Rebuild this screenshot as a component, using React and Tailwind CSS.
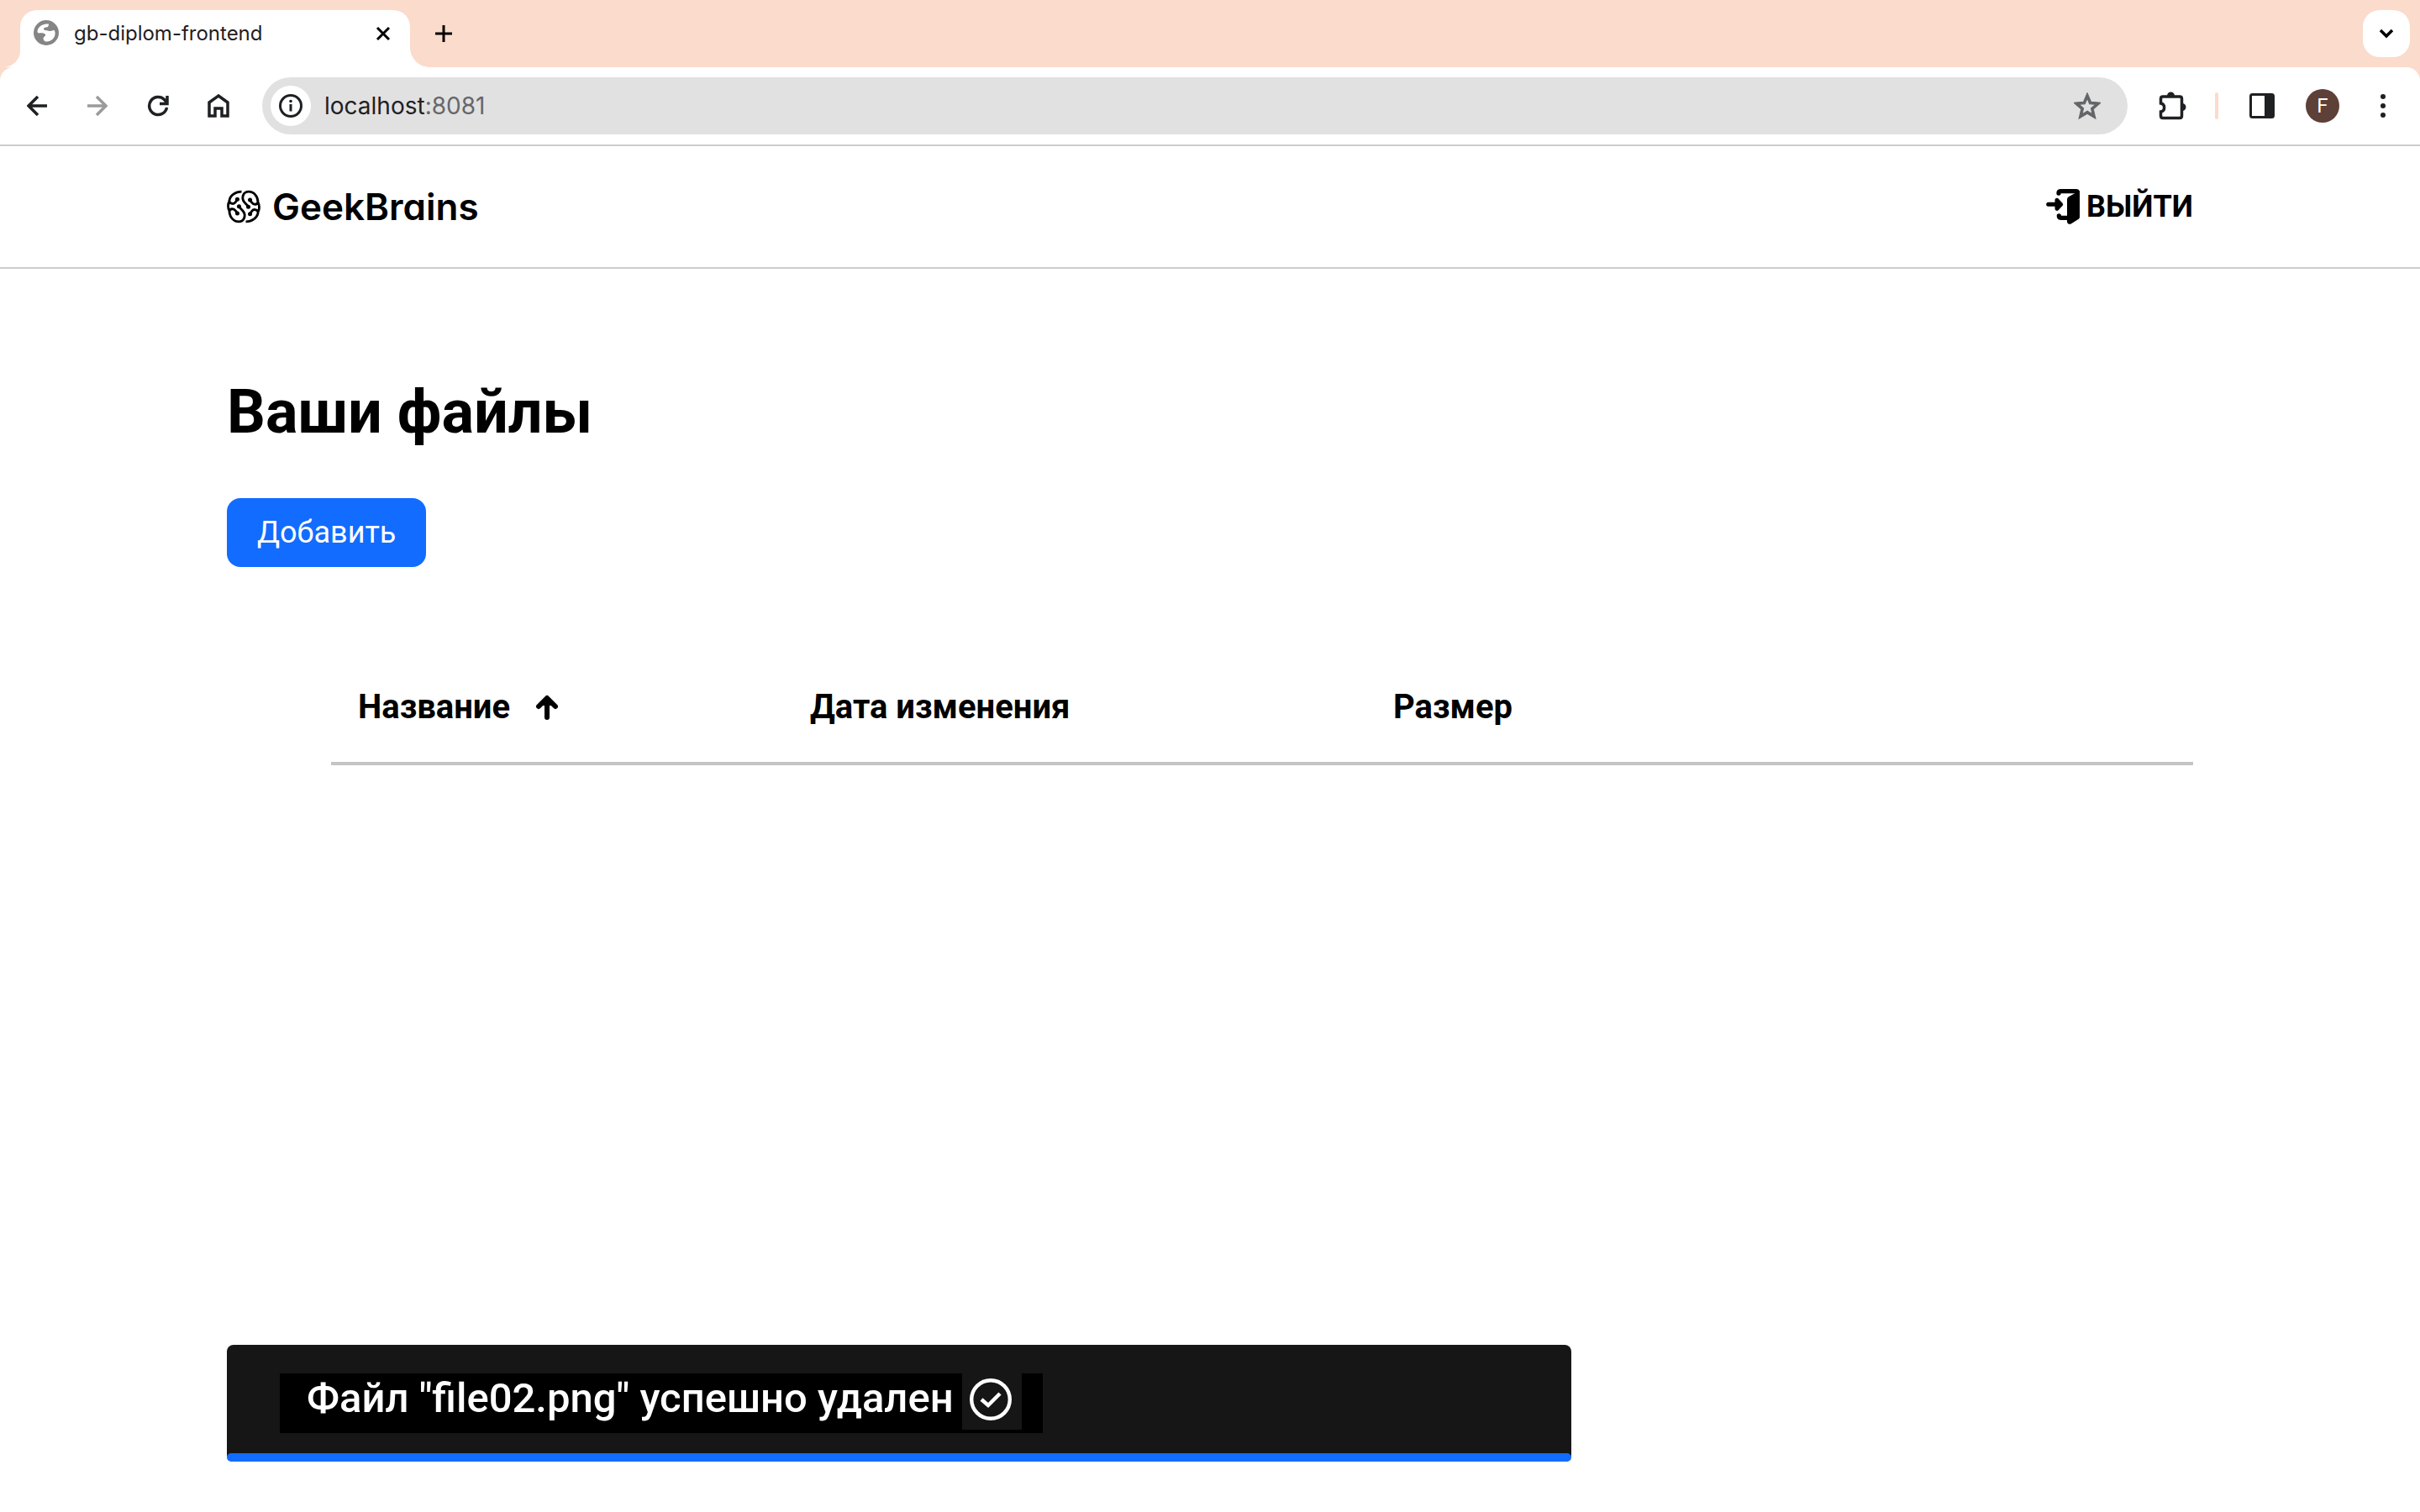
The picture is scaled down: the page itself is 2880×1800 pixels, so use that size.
import React from "react";

function GlobeIcon() {
  return (
    <svg className="size-[30px] shrink-0" viewBox="0 0 30 30" aria-hidden="true">
      <circle cx="15" cy="15" r="15" fill="#858585" />
      <path
        d="M18 4.500C14 4 8 5.500 5.500 10C4 13 4 15 6 15.500C9 15 13 15 14 17C15 19 11 20 11.500 22C12 24 13 25.500 15 25.500C20 26 25 22 25.500 17C26 14 25 12 24 12C22 12 21 13.500 18.500 13C16 12 14 12.500 12.500 11.500C11 10 13 8.500 15 8.500C17 8.500 18 7 18 4.500Z"
        fill="#fff"
      />
    </svg>
  );
}

function BrainLobe() {
  return (
    <g>
      <path
        d="M81 37C60 37 40 50 38 68C36 78 52 84 59 75L66 64M38 70C32 80 32 96 38 106M38 106C40 96 54 96 59 104L66 113M38 106C38 126 52 143 71 143C90 143 95 124 90 112C86 102 76 98 72 89"
        fill="none"
        stroke="currentColor"
        strokeWidth="8.500"
        strokeLinejoin="round"
      />
      <circle cx="66" cy="64" r="7.500" fill="currentColor" />
      <circle cx="72" cy="89" r="7.500" fill="currentColor" />
      <circle cx="66" cy="114" r="7.500" fill="currentColor" />
    </g>
  );
}

function BrainLogo() {
  return (
    <svg className="size-10 shrink-0" viewBox="29 31 119 118" aria-hidden="true">
      <BrainLobe />
      <g transform="rotate(180 88.500 90)">
        <BrainLobe />
      </g>
    </svg>
  );
}

function ExitIcon() {
  return (
    <svg className="h-[42px] w-10 shrink-0" viewBox="0 0 120 126" aria-hidden="true">
      <path d="M45 15C45 10 48 8 53 8H108C113 8 112 12 112 16V96" fill="none" stroke="currentColor" strokeWidth="16" strokeLinecap="round" />
      <path d="M75 38C75 32 78 28 83 26L120 6V98C120 103 118 107 114 109L90 124C83 128 75 124 75 116Z" fill="currentColor" />
      <path d="M46 96C46 101 50 103 55 103H80" fill="none" stroke="currentColor" strokeWidth="16" strokeLinecap="round" />
      <path d="M8 55H50M39 40L53 55L39 70Z" fill="currentColor" stroke="currentColor" strokeWidth="15" strokeLinecap="round" strokeLinejoin="round" />
    </svg>
  );
}

function ToolButton({ label, children, className = "" }) {
  return (
    <button type="button" aria-label={label} className={`flex size-14 shrink-0 items-center justify-center ${className}`}>
      {children}
    </button>
  );
}

const line = {
  fill: "none",
  stroke: "currentColor",
  strokeWidth: 4,
};

function TabStrip() {
  return (
    <div className="flex h-20 items-end bg-[#fbdbcb] pr-3">
      <svg className="h-[20px] w-6 shrink-0" viewBox="0 0 24 20" aria-hidden="true">
        <path d="M24 0C24 11 15 20 4 20H24Z" fill="#fff" />
      </svg>
      <div className="flex h-[68px] w-[464px] items-start rounded-t-[20px] bg-white pt-3 pr-5 pl-4">
        <GlobeIcon />
        <span className="ml-[18px] flex-1 font-[Inter] text-[24px] leading-[32px] text-[#1f2024]">gb-diplom-frontend</span>
        <button type="button" aria-label="Close tab" className="flex h-8 w-6 items-center justify-center">
          <svg className="size-[18px]" viewBox="0 0 18 18" aria-hidden="true">
            <path d="M2 2L16 16M16 2L2 16" {...line} strokeWidth="3" />
          </svg>
        </button>
      </div>
      <svg className="h-[24px] w-6 shrink-0" viewBox="0 0 24 24" aria-hidden="true">
        <path d="M0 0C0 13 10 24 24 24H0Z" fill="#fff" />
      </svg>
      <button type="button" aria-label="New tab" className="mb-5 -ml-1 flex size-10 items-center justify-center self-end">
        <svg className="size-5" viewBox="0 0 20 20" aria-hidden="true">
          <path d="M10 0V20M0 10H20" {...line} strokeWidth="3" />
        </svg>
      </button>
      <button type="button" aria-label="Search tabs" className="mb-3 ml-auto flex size-14 items-center justify-center rounded-[20px] bg-white">
        <svg className="h-3 w-[18px]" viewBox="0 0 18 12" aria-hidden="true">
          <path d="M2 2L9 9L16 2" {...line} strokeWidth="3.500" />
        </svg>
      </button>
    </div>
  );
}

function Toolbar() {
  return (
    <div className="bg-[#fbdbcb]">
      <div className="flex h-[94px] items-center rounded-t-[16px] border-b-2 border-[#ccc] bg-white pr-4 pl-4 text-[#1f2024]">
        <div className="flex gap-4">
          <ToolButton label="Back">
            <svg className="size-6" viewBox="0 0 24 24" aria-hidden="true">
              <path d="M24 12H3M13 1L2 12L13 23" {...line} strokeWidth="3.500" />
            </svg>
          </ToolButton>
          <ToolButton label="Forward" className="text-[#9b9b9b]">
            <svg className="size-6" viewBox="0 0 24 24" aria-hidden="true">
              <path d="M0 12H21M11 1L22 12L11 23" {...line} strokeWidth="3.500" />
            </svg>
          </ToolButton>
          <ToolButton label="Reload">
            <svg className="size-[26px]" viewBox="0 0 26 26" aria-hidden="true">
              <path d="M23.500 15A10.500 10.500 0 1 1 20.500 5.500L23.500 9M24 1V10.500H15" {...line} strokeWidth="3.500" />
            </svg>
          </ToolButton>
          <ToolButton label="Home">
            <svg className="h-7 w-[26px]" viewBox="0 0 26 28" aria-hidden="true">
              <path d="M2 10L13 2L24 10V26H17V17H9V26H2Z" {...line} strokeWidth="3.500" />
            </svg>
          </ToolButton>
        </div>
        <div className="ml-6 flex h-[68px] flex-1 items-center rounded-full bg-[#e1e1e1] pr-[20px] pl-[10px]">
          <button type="button" aria-label="Site information" className="flex size-12 items-center justify-center rounded-full bg-white">
            <svg className="size-7" viewBox="0 0 28 28" aria-hidden="true">
              <circle cx="14" cy="14" r="12.500" {...line} strokeWidth="3" />
              <path d="M14 12V20.500" {...line} strokeWidth="3" />
              <circle cx="14" cy="8.500" r="1.800" fill="currentColor" />
            </svg>
          </button>
          <div className="relative ml-4 h-12 flex-1 font-[Inter] text-[28px] leading-[48px]">
            <span aria-hidden="true" className="pointer-events-none absolute inset-0">
              localhost<span className="text-[#66676b]">:8081</span>
            </span>
            <input
              type="text"
              aria-label="Address"
              defaultValue="localhost:8081"
              className="h-12 w-full bg-transparent text-transparent caret-black outline-none"
            />
          </div>
          <ToolButton label="Bookmark this tab" className="text-[#646567]">
            <svg className="size-8" viewBox="0 0 24 24" aria-hidden="true">
              <path
                fill="currentColor"
                stroke="currentColor"
                strokeWidth=".8"
                d="M24 9.240L15.370 8.490L12 .5L8.630 8.500L0 9.240L6.550 14.920L4.580 23.400L12 18.900L19.420 23.400L17.460 14.920ZM12 16.640L7.490 19.400L8.690 14.200L4.700 10.700L9.960 10.250L12 5.340L14.050 10.260L19.310 10.720L15.320 14.180L16.520 19.310Z"
              />
            </svg>
          </ToolButton>
        </div>
        <ToolButton label="Extensions" className="ml-[26px]">
          <svg className="h-9 w-[34px]" viewBox="0 0 34 36" aria-hidden="true">
            <path
              d="M5 7H25Q27.500 7 27.500 9.500V30Q27.500 32.500 25 32.500H5Q2.500 32.500 2.500 30V25C8 24 8 16 2.500 15V9.500Q2.500 7 5 7Z"
              {...line}
              strokeWidth="3.500"
            />
            <path d="M10 6A4.500 4.500 0 0 1 19 6ZM28 15A4.500 4.500 0 0 1 28 24Z" fill="currentColor" />
          </svg>
        </ToolButton>
        <span className="mr-6 ml-[22px] h-8 w-1 rounded-full bg-[#fbdbcb]" />
        <ToolButton label="Side panel">
          <svg className="size-[30px]" viewBox="0 0 30 30" aria-hidden="true">
            <rect x="1.500" y="1.500" width="27" height="27" rx="2" {...line} strokeWidth="3" />
            <path d="M18 1H27L29 3V27L27 29H18Z" fill="currentColor" />
          </svg>
        </ToolButton>
        <button type="button" aria-label="Profile" className="ml-6 flex size-10 items-center justify-center rounded-full bg-[#5d4037] font-[Roboto] text-[24px] leading-none text-white">
          F
        </button>
        <ToolButton label="Menu" className="ml-6">
          <svg className="h-7 w-2" viewBox="0 0 8 28" fill="currentColor" aria-hidden="true">
            <circle cx="4" cy="3" r="3" />
            <circle cx="4" cy="14" r="3" />
            <circle cx="4" cy="25" r="3" />
          </svg>
        </ToolButton>
      </div>
    </div>
  );
}

function Header() {
  return (
    <header className="border-b-2 border-[#ccc]">
      <div className="mx-auto flex h-36 max-w-[2340px] items-center justify-between">
        <a href="#" className="flex items-center gap-[14px]">
          <BrainLogo />
          <span className="font-[Inter] text-[44px] leading-[48px] font-semibold [font-feature-settings:'cv11']">GeekBrains</span>
        </a>
        <a href="#" className="flex items-center gap-2 text-[36px] leading-[42px] font-bold">
          <ExitIcon />
          ВЫЙТИ
        </a>
      </div>
    </header>
  );
}

function FilesTable() {
  return (
    <table className="mt-[143px] ml-auto w-[2216px] max-w-full table-fixed border-separate border-spacing-0 text-left text-[40px] leading-[48px] [&_th]:border-b-4 [&_th]:border-[#c4c4c4] [&_th]:pb-[41px] [&_th]:pl-8 [&_th]:font-bold">
      <thead>
        <tr>
          <th className="w-[538px]">
            <button type="button" className="flex items-center gap-[30px] font-bold">
              Название
              <svg className="h-[30px] w-7" viewBox="0 0 28 30" aria-hidden="true">
                <path d="M14 5V27M4 14L14 4L24 14" fill="none" stroke="currentColor" strokeWidth="6" strokeLinecap="round" strokeLinejoin="round" />
                <path d="M6 13L14 5L22 13Z" fill="currentColor" />
              </svg>
            </button>
          </th>
          <th className="w-[694px]">Дата изменения</th>
          <th>Размер</th>
        </tr>
      </thead>
    </table>
  );
}

function Toast() {
  return (
    <div className="fixed inset-x-0 bottom-[60px]">
      <div className="mx-auto max-w-[2340px]">
        <div role="status" className="w-[1600px] max-w-full rounded-[8px] bg-[#161616] pt-[34px] text-white">
          <div className="ml-[63px] flex h-[71px] w-fit items-start bg-black pr-[25px] pl-8">
            <p className="mr-[10px] text-[49px] leading-[60px] font-medium">Файл "file02.png" успешно удален</p>
            <span className="flex h-[67px] w-[71px] items-start bg-[#161616] pt-[6px] pl-[9px]">
              <svg className="size-[50px]" viewBox="0 0 50 50" aria-hidden="true">
                <circle cx="25" cy="25" r="22.800" {...line} strokeWidth="4.400" />
                <path d="M14 25L22 32L36 18" {...line} strokeWidth="4.500" />
              </svg>
            </span>
          </div>
          <div className="mt-6 h-[10px] rounded-[5px] bg-[#126cff]" />
        </div>
      </div>
    </div>
  );
}

export default function App() {
  return (
    <div className="min-h-screen bg-white font-[Roboto,sans-serif] text-black">
      <TabStrip />
      <Toolbar />
      <Header />
      <main className="mx-auto max-w-[2340px] pt-[129px]">
        <h1 className="text-[72px] leading-[84px] font-bold">Ваши файлы</h1>
        <button type="button" className="mt-[60px] flex h-[82px] items-center rounded-[16px] bg-[#126cff] px-9 text-[36px] leading-[42px] text-white">
          Добавить
        </button>
        <FilesTable />
      </main>
      <Toast />
    </div>
  );
}
